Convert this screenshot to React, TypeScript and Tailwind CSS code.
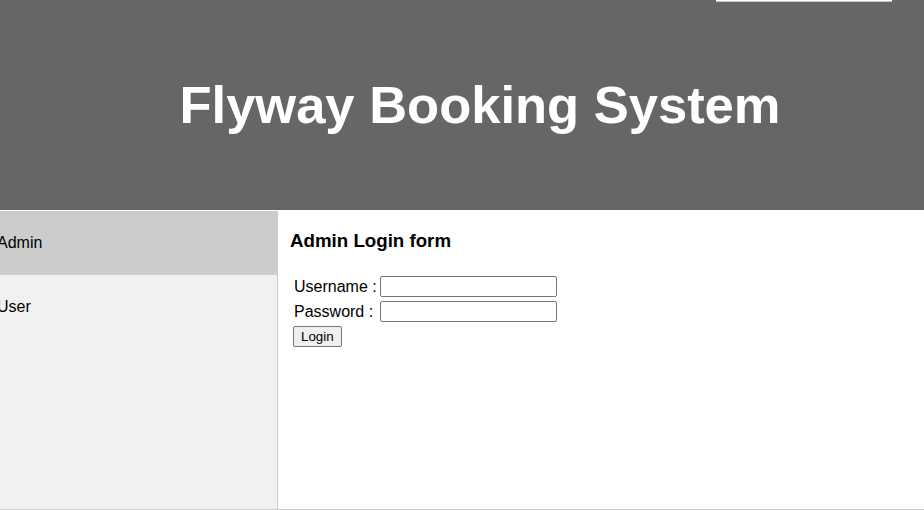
export default function App() {
  return (
    <div className="relative w-[924px] h-[510px] overflow-hidden bg-white font-['Liberation_Sans',Arial,sans-serif] text-black">
      {/* strip of something scrolled off above */}
      <div className="absolute left-[716px] top-0 w-[176px] h-[2px] bg-white border-b border-[#c8c8c8]" />

      <header className="h-[210px] bg-[#666666] flex items-center justify-center pl-[36px]">
        <h1 className="text-[52.5px] font-bold text-white leading-none">Flyway Booking System</h1>
      </header>

      <div className="flex h-[299px] border-b border-[#cccccc] mt-px">
        <nav className="w-[278px] shrink-0 bg-[#f1f1f1] border-r border-[#cccccc]">
          <div className="h-[64px] bg-[#cccccc] flex items-center -ml-[3px] text-[16px]">Admin</div>
          <div className="h-[64px] flex items-center -ml-[3px] text-[16px]">User</div>
        </nav>

        <main className="flex-1 pl-[12px] pt-[19px]">
          <h3 className="text-[18.72px] font-bold leading-[22px]">Admin Login form</h3>
          <form className="mt-[24px] pl-[4px] flex flex-col text-[16px]">
            <div className="flex items-center h-[21px]">
              <span className="w-[86px]">Username :</span>
              <input type="text" className="w-[177px] h-[21px] border border-[#767676] rounded-[2px] bg-white" />
            </div>
            <div className="flex items-center h-[21px] mt-[4px]">
              <span className="w-[86px]">Password :</span>
              <input type="password" className="w-[177px] h-[21px] border border-[#767676] rounded-[2px] bg-white" />
            </div>
            <div className="mt-[2px] -ml-[1px]">
              <button type="button" className="h-[21px] px-[7px] text-[13.33px] bg-[#efefef] border border-[#767676] rounded-[2px]">Login</button>
            </div>
          </form>
        </main>
      </div>
    </div>
  );
}
